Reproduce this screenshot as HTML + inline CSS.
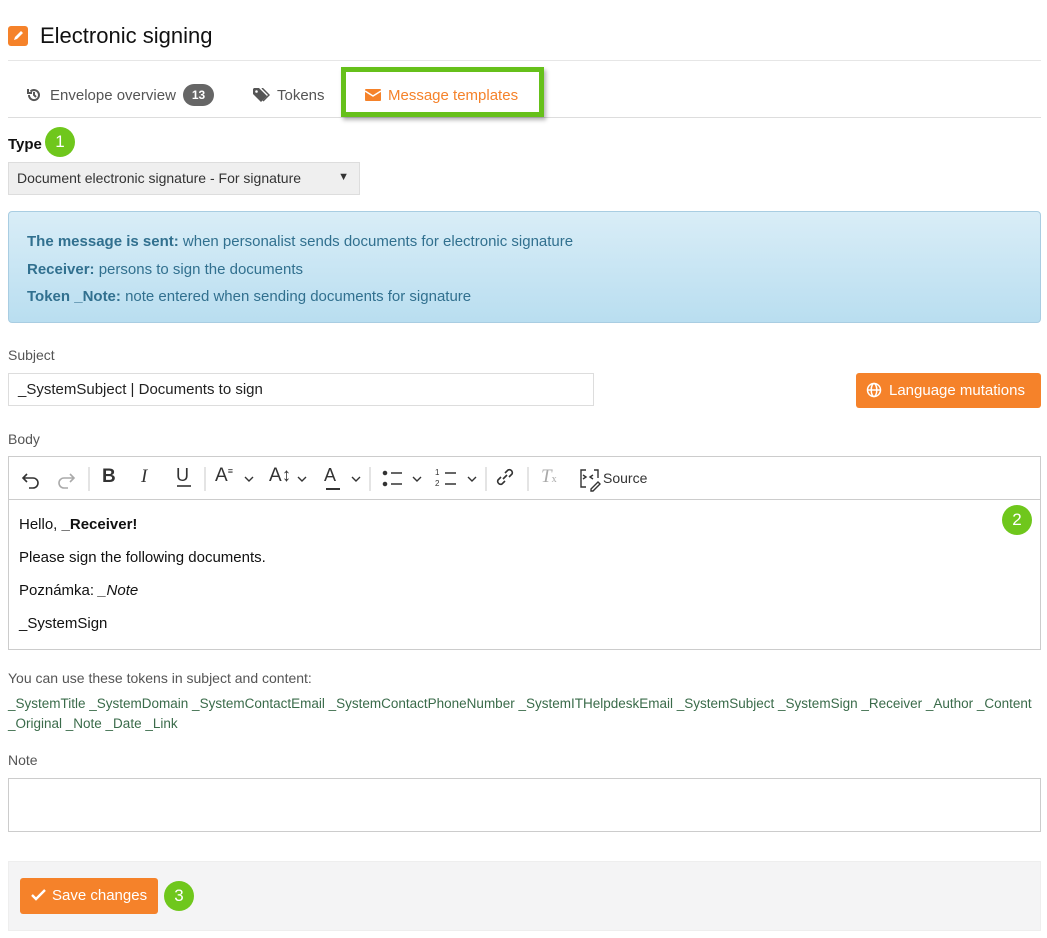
<!DOCTYPE html>
<html><head><meta charset="utf-8"><style>
*{box-sizing:border-box;margin:0;padding:0}
body{width:1047px;height:938px;background:#fff;font-family:"Liberation Sans",sans-serif;font-size:14px;color:#222;position:relative;overflow:hidden}
.a{position:absolute}
.badge{background:#6fc71c;color:#fff;border-radius:50%;width:30px;height:30px;display:flex;align-items:center;justify-content:center;font-size:17px}
.lbl{color:#555;font-size:14px}
.tb svg{display:block}
.ed{font-size:15px;color:#111}
</style></head><body>
<div class="a" style="left:8px;top:26px;width:20px;height:20px;background:#f5822a;border-radius:3px"><svg width="20" height="20" viewBox="0 0 20 20"><path d="M6 14l1-3 6-6 2 2-6 6z" fill="#fff"/></svg></div>
<div class="a" style="left:40px;top:23px;font-size:22px;color:#111">Electronic signing</div>
<div class="a" style="left:8px;top:60px;width:1033px;height:1px;background:#e6e6e6"></div>
<div class="a" style="left:8px;top:117px;width:1033px;height:1px;background:#ddd"></div>
<div class="a" style="left:26px;top:87px"><svg width="16" height="16" viewBox="0 0 16 16" fill="none" stroke="#555" stroke-width="2"><path d="M3 8a5 5 0 1 0 1.5-3.5"/><path d="M2 2v4h4" /><path d="M8 5v3l2 2"/></svg></div>
<div class="a" style="left:50px;top:87px;color:#555;font-size:15px">Envelope overview</div>
<div class="a" style="left:183px;top:84px;width:31px;height:22px;border-radius:11px;background:#666;color:#fff;font-size:12px;font-weight:bold;text-align:center;line-height:22px">13</div>
<div class="a" style="left:253px;top:88px"><svg width="17" height="15" viewBox="0 0 17 15"><path d="M0 1v5l8 8 6-6-8-8H1z" fill="#555"/><circle cx="3.5" cy="3.5" r="1.3" fill="#fff"/><path d="M9 0l7 7-6 6" stroke="#555" stroke-width="1.5" fill="none"/></svg></div>
<div class="a" style="left:277px;top:87px;color:#555;font-size:15px">Tokens</div>
<div class="a" style="left:341px;top:67px;width:203px;height:50px;border:5px solid #66c01a;box-shadow:2px 3px 4px rgba(0,0,0,.3)"></div>
<div class="a" style="left:365px;top:89px;width:16px;height:12px;background:#f5822a;border-radius:1px"><svg width="16" height="12"><path d="M0 1l8 5 8-5" stroke="#fff" stroke-width="1.5" fill="none"/></svg></div>
<div class="a" style="left:388px;top:87px;color:#f5822a;font-size:15px">Message templates</div>
<div class="a" style="left:8px;top:136px;font-weight:bold;font-size:15px;color:#111">Type</div>
<div class="a badge" style="left:45px;top:127px">1</div>
<div class="a" style="left:8px;top:162px;width:352px;height:33px;background:#efefef;border:1px solid #ddd;color:#333;padding:7px 8px;font-size:14px">Document electronic signature - For signature<span style="position:absolute;right:10px;top:8px;font-size:11px">▼</span></div>
<div class="a" style="left:8px;top:211px;width:1033px;height:112px;border:1px solid #a9cde2;border-radius:4px;background:linear-gradient(#d9edf7,#b9def0);color:#31708f;font-size:15px;padding:16px 18px;line-height:27.5px">
<div><b>The message is sent:</b> when personalist sends documents for electronic signature</div>
<div><b>Receiver:</b> persons to sign the documents</div>
<div><b>Token _Note:</b> note entered when sending documents for signature</div></div>
<div class="a lbl" style="left:8px;top:347px">Subject</div>
<div class="a" style="left:8px;top:373px;width:586px;height:33px;border:1px solid #ddd;padding:7px 9px;color:#222;font-size:15px">_SystemSubject | Documents to sign</div>
<div class="a" style="left:856px;top:373px;width:185px;height:35px;background:#f5822a;border-radius:3px;color:#fff;font-size:15px;line-height:35px;padding-left:33px">Language mutations</div>
<div class="a" style="left:866px;top:382px"><svg width="16" height="16" viewBox="0 0 16 16" fill="none" stroke="#fff" stroke-width="1.5"><circle cx="8" cy="8" r="6.5"/><ellipse cx="8" cy="8" rx="2.8" ry="6.5"/><path d="M1.5 8h13"/></svg></div>
<div class="a lbl" style="left:8px;top:431px">Body</div>
<div class="a" style="left:8px;top:456px;width:1033px;height:194px;border:1px solid #ccc"></div>
<div class="a" style="left:9px;top:499px;width:1031px;height:1px;background:#ccc"></div>
<div class="a tb" style="left:9px;top:457px;width:1000px;height:42px">
<svg width="700" height="42" viewBox="0 0 700 42" fill="none" stroke="#333" stroke-width="1.6">
<path d="M14 21h10a5 5 0 0 1 0 10h-4M18 17l-4 4 4 4"/>
<path d="M65 21h-10a5 5 0 0 0 0 10h4M61 17l4 4-4 4" stroke="#aaa"/>
<line x1="80" y1="10" x2="80" y2="34" stroke="#ddd"/>
<line x1="196" y1="10" x2="196" y2="34" stroke="#ddd"/>
<line x1="361" y1="10" x2="361" y2="34" stroke="#ddd"/>
<line x1="477" y1="10" x2="477" y2="34" stroke="#ddd"/>
<line x1="519" y1="10" x2="519" y2="34" stroke="#ddd"/>
<path d="M168 29h14" />
<path d="M236 20l4 4 4-4M289 20l4 4 4-4M343 20l4 4 4-4M404 20l4 4 4-4M459 20l4 4 4-4" stroke-width="1.4"/>
<circle cx="376" cy="16" r="1.5" fill="#333"/><circle cx="376" cy="27" r="1.5" fill="#333"/><path d="M382 16h11M382 27h11"/>
<path d="M436 16h11M436 27h11"/>
<path d="M317 32h14" stroke-width="2"/>
<path d="M496 24l-3 3a3 3 0 0 1-4-4l3-3M500 20l3-3a3 3 0 0 0-4-4l-3 3M494 22l4-4"/>
<path d="M577 13h-5v17h5M585 13h4v8M574 22l3-2-3-2M584 18l-3 2 3 2M582 32l7-7 2 2-7 7h-2z" stroke-width="1.4"/>
</svg></div>
<div class="a" style="left:102px;top:466px;font-weight:bold;font-size:19px;color:#333">B</div>
<div class="a" style="left:141px;top:466px;font-style:italic;font-size:19px;color:#333;font-family:'Liberation Serif',serif">I</div>
<div class="a" style="left:176px;top:465px;font-size:18px;color:#333">U</div>
<div class="a" style="left:215px;top:465px;font-size:19px;color:#333">A<span style="font-size:9px;vertical-align:7px">≡</span></div>
<div class="a" style="left:269px;top:465px;font-size:19px;color:#333">A↕</div>
<div class="a" style="left:324px;top:465px;font-size:18px;color:#333">A</div>
<div class="a" style="left:435px;top:467px;font-size:8px;color:#333;line-height:11px">1<br>2</div>
<div class="a" style="left:541px;top:466px;font-style:italic;font-size:19px;color:#aaa;font-family:'Liberation Serif',serif">T<span style="font-size:10px;font-style:normal">x</span></div>
<div class="a" style="left:603px;top:470px;color:#333">Source</div>
<div class="a ed" style="left:19px;top:516px">Hello, <b>_Receiver!</b></div>
<div class="a ed" style="left:19px;top:549px">Please sign the following documents.</div>
<div class="a ed" style="left:19px;top:582px">Poznámka: <i>_Note</i></div>
<div class="a ed" style="left:19px;top:615px">_SystemSign</div>
<div class="a badge" style="left:1002px;top:505px">2</div>
<div class="a lbl" style="left:8px;top:670px">You can use these tokens in subject and content:</div>
<div class="a" style="left:8px;top:694px;width:1040px;color:#3a6b4a;font-size:13.5px;line-height:20px">_SystemTitle _SystemDomain _SystemContactEmail _SystemContactPhoneNumber _SystemITHelpdeskEmail _SystemSubject _SystemSign _Receiver _Author _Content<br>_Original _Note _Date _Link</div>
<div class="a lbl" style="left:8px;top:752px">Note</div>
<div class="a" style="left:8px;top:778px;width:1033px;height:54px;border:1px solid #ccc"></div>
<div class="a" style="left:8px;top:861px;width:1033px;height:70px;background:#f4f4f5;border:1px solid #eee"></div>
<div class="a" style="left:20px;top:878px;width:138px;height:36px;background:#f5822a;border-radius:3px;color:#fff;font-size:15px;line-height:36px;padding-left:32px">Save changes</div>
<div class="a" style="left:31px;top:888px"><svg width="15" height="14" viewBox="0 0 15 14"><path d="M1 7l4 4 9-9" stroke="#fff" stroke-width="2.4" fill="none"/></svg></div>
<div class="a badge" style="left:164px;top:881px">3</div>
</body></html>
